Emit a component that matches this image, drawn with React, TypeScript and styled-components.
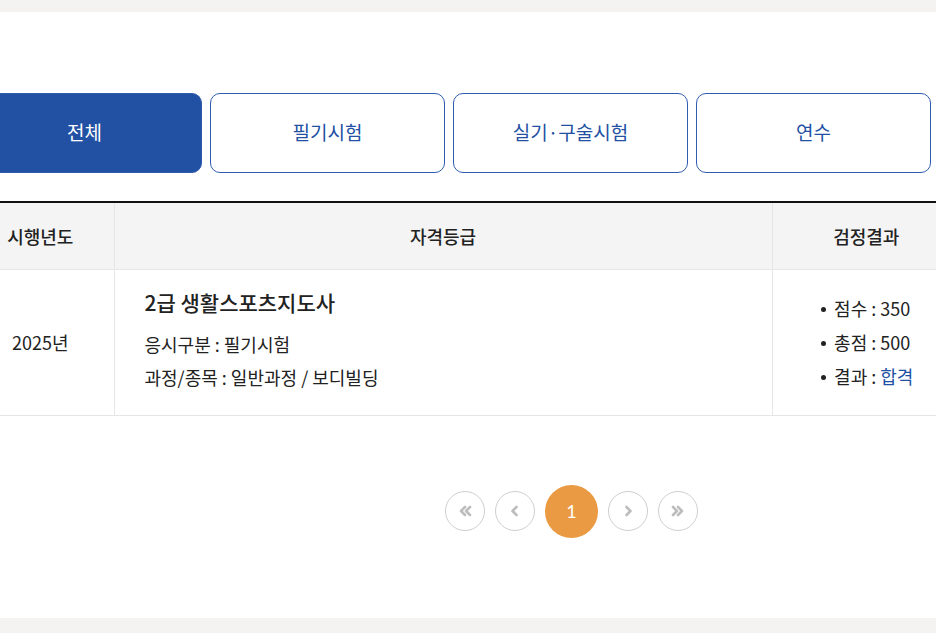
import React from "react";
import styled, { createGlobalStyle } from "styled-components";

const Global = createGlobalStyle`
  html, body { margin: 0; padding: 0; background: #f4f3f1; overflow: hidden; }
  body { width: 936px; height: 633px; font-family: "Noto Sans CJK KR", "Noto Sans", sans-serif; color: #222; }
  * { box-sizing: border-box; }
`;

const Page = styled.div`
  margin-top: 12px;
  height: 606px;
  background: #fff;
  overflow: hidden;
  padding-top: 81px;
`;

const Wrap = styled.div`
  margin-left: -33px;
  width: 993px;
`;

const Tabs = styled.ul`
  list-style: none;
  margin: 0;
  padding: 0;
  display: grid;
  grid-template-columns: repeat(4, 235px);
  gap: 8px;
`;

const Tab = styled.li<{ $active?: boolean }>`
  height: 80px;
  border-radius: 10px;
  border: 1.5px solid #2f5cae;
  background: ${(p) => (p.$active ? "#2250a3" : "#fff")};
  color: ${(p) => (p.$active ? "#fff" : "#2250a3")};
  font-size: 19px;
  font-weight: 400;
  display: flex;
  align-items: center;
  justify-content: center;
  padding-bottom: 3px;
`;

const Table = styled.table`
  margin-top: 28px;
  width: 993px;
  border-collapse: collapse;
  border-top: 2px solid #111;
  table-layout: fixed;
`;

const Th = styled.th`
  height: 67px;
  background: #f4f4f4;
  border-bottom: 1px solid #e6e6e6;
  border-left: 1px solid #e6e6e6;
  font-size: 18px;
  font-weight: 500;
  color: #222;
  &:first-child { border-left: none; }
`;

const Td = styled.td<{ $align?: string }>`
  height: 146px;
  border-bottom: 1px solid #e6e6e6;
  border-left: 1px solid #e6e6e6;
  text-align: ${(p) => p.$align || "center"};
  vertical-align: middle;
  font-size: 18px;
  color: #222;
  &:first-child { border-left: none; }
`;

const InfoCell = styled.div`
  padding-left: 29px;
  display: flex;
  flex-direction: column;
`;

const Title = styled.div`
  font-size: 21px;
  font-weight: 500;
  line-height: 30px;
  margin-bottom: 11px;
  margin-top: -3px;
`;

const InfoLine = styled.div`
  font-size: 18px;
  line-height: 33px;
`;

const ResultList = styled.ul`
  list-style: none;
  margin: 0;
  padding: 0 0 0 2px;
  display: inline-block;
  text-align: left;
`;

const ResultItem = styled.li`
  position: relative;
  padding-left: 13px;
  line-height: 34px;
  font-size: 18px;
  &::before {
    content: "";
    position: absolute;
    left: 0;
    top: 16px;
    width: 5px;
    height: 5px;
    border-radius: 50%;
    background: #222;
  }
`;

const Pass = styled.span`
  color: #2250a3;
`;

const Pager = styled.nav`
  margin-top: 69px;
  padding-left: 478px;
  display: flex;
  align-items: center;
  gap: 10px;
`;

const PageBtn = styled.span<{ $active?: boolean }>`
  width: ${(p) => (p.$active ? "53px" : "40px")};
  height: ${(p) => (p.$active ? "53px" : "40px")};
  border-radius: 50%;
  border: ${(p) => (p.$active ? "none" : "1.5px solid #cfcfcf")};
  background: ${(p) => (p.$active ? "#ea9a42" : "#fff")};
  color: #fff;
  font-size: 18px;
  font-family: "Lato", "Noto Sans", sans-serif;
  display: flex;
  align-items: center;
  justify-content: center;
`;

const Chev = ({ d }: { d: string }) => (
  <svg width="18" height="18" viewBox="0 0 18 18" fill="none" stroke="#bdbdbd" strokeWidth="2.6" strokeLinecap="round" strokeLinejoin="round">
    <path d={d} />
  </svg>
);

export default function App() {
  return (
    <>
      <Global />
      <Page>
        <Wrap>
          <Tabs>
            <Tab $active>전체</Tab>
            <Tab>필기시험</Tab>
            <Tab>실기·구술시험</Tab>
            <Tab>연수</Tab>
          </Tabs>
          <Table>
            <colgroup>
              <col style={{ width: 147 }} />
              <col style={{ width: 658 }} />
              <col style={{ width: 188 }} />
            </colgroup>
            <thead>
              <tr>
                <Th>시행년도</Th>
                <Th>자격등급</Th>
                <Th>검정결과</Th>
              </tr>
            </thead>
            <tbody>
              <tr>
                <Td>2025년</Td>
                <Td $align="left">
                  <InfoCell>
                    <Title>2급 생활스포츠지도사</Title>
                    <InfoLine>응시구분 : 필기시험</InfoLine>
                    <InfoLine>과정/종목 : 일반과정 / 보디빌딩</InfoLine>
                  </InfoCell>
                </Td>
                <Td>
                  <ResultList>
                    <ResultItem>점수 : 350</ResultItem>
                    <ResultItem>총점 : 500</ResultItem>
                    <ResultItem>
                      결과 : <Pass>합격</Pass>
                    </ResultItem>
                  </ResultList>
                </Td>
              </tr>
            </tbody>
          </Table>
          <Pager>
            <PageBtn><Chev d="M9 5 L5 9 L9 13 M14 5 L10 9 L14 13" /></PageBtn>
            <PageBtn><Chev d="M10.5 5 L6.5 9 L10.5 13" /></PageBtn>
            <PageBtn $active>1</PageBtn>
            <PageBtn><Chev d="M7.5 5 L11.5 9 L7.5 13" /></PageBtn>
            <PageBtn><Chev d="M4 5 L8 9 L4 13 M9 5 L13 9 L9 13" /></PageBtn>
          </Pager>
        </Wrap>
      </Page>
    </>
  );
}
